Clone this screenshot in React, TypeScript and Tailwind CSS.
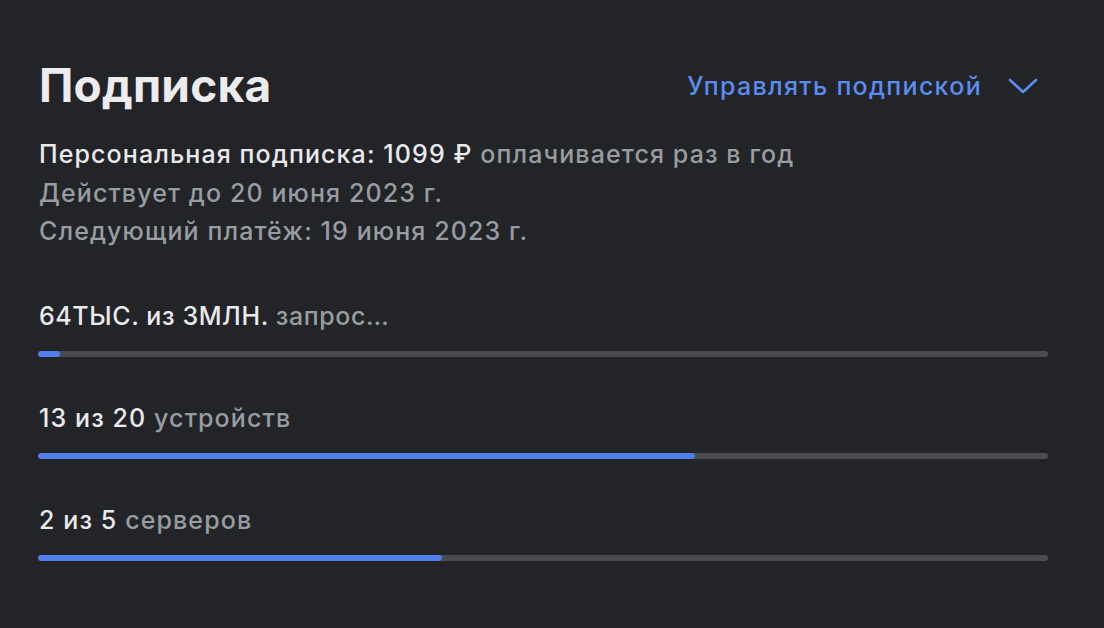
import React from "react";

const rows = [
  { strong: "64ТЫС. из 3МЛН.", muted: "запрос", tail: "…", pct: 64000 / 3000000, tight: true },
  { strong: "13 из 20", muted: "устройств", tail: "", pct: 13 / 20, tight: false },
  { strong: "2 из 5", muted: "серверов", tail: "", pct: 2 / 5, tight: false },
];

export default function App() {
  return (
    <div
      className="w-[1104px] h-[628px] bg-[#232428] text-[#e9eaec] pl-[38px] pr-[56px] pt-[57px] overflow-hidden"
      style={{ fontFamily: "Inter, 'Noto Sans', sans-serif" }}
    >
      <div className="flex items-center justify-between">
        <h1 className="text-[46px] leading-[56px] font-bold tracking-[0.2px] text-[#ececee] pl-[1px]">Подписка</h1>
        <button className="flex items-center gap-[26px] text-[#5b8def] text-[25px] font-medium tracking-[1.3px] leading-[38px] pr-[10px] pt-[2px]">
          <span>Управлять подпиской</span>
          <svg width="30" height="16" viewBox="0 0 30 16" fill="none">
            <path d="M2 2 L15 14 L28 2" stroke="#5b8def" strokeWidth="2.6" strokeLinecap="round" strokeLinejoin="round" />
          </svg>
        </button>
      </div>

      <div className="mt-[22px] text-[25px] font-medium tracking-[1.1px] leading-[38.5px] pl-[1px]">
        <div>
          Персональная подписка: 1099 ₽ <span className="text-[#989ca3]">оплачивается раз в год</span>
        </div>
        <div className="text-[#989ca3]">Действует до 20 июня 2023 г.</div>
        <div className="text-[#989ca3]">Следующий платёж: 19 июня 2023 г.</div>
      </div>

      <div className="mt-[46px] flex flex-col gap-[42px]">
        {rows.map((r) => (
          <div key={r.strong} className="flex flex-col gap-[16px]">
            <div
              className={
                r.tight
                  ? "text-[25px] font-medium tracking-[0.6px] leading-[38px] pl-[1px]"
                  : "text-[25px] font-medium tracking-[1.1px] leading-[38px] pl-[1px]"
              }
            >
              {r.strong}{" "}
              <span className="text-[#989ca3]">
                {r.muted}
                {r.tail && <span className="tracking-[-1px]">{r.tail}</span>}
              </span>
            </div>
            <div className="h-[6px] w-full rounded-full bg-[#4a4c50] overflow-hidden">
              <div className="h-full rounded-full bg-[#4f7ee8]" style={{ width: `${r.pct * 100}%` }} />
            </div>
          </div>
        ))}
      </div>
    </div>
  );
}
